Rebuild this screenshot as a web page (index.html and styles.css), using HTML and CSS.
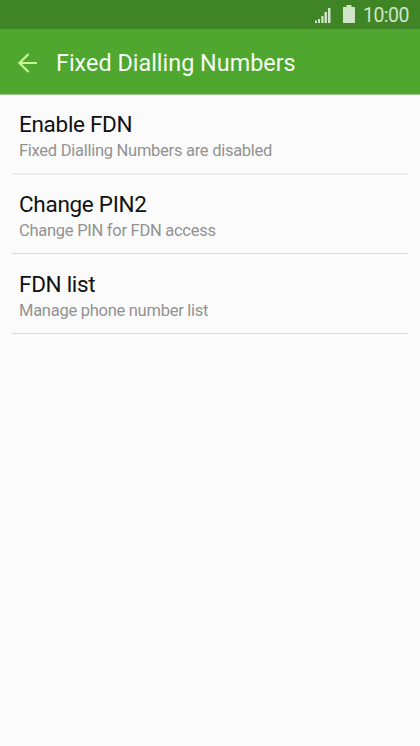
FILE: index.html
```html
<!DOCTYPE html>
<html lang="en">
<head>
  <meta charset="UTF-8">
  <title>Fixed Dialling Numbers</title>
  <link rel="stylesheet" href="styles.css">
</head>
<body>

<div class="status-bar">
  <svg class="signal" width="16" height="16" viewBox="0 0 16 16">
    <path d="M0 13.500h2V16H0zM3 12h2v4H3zM6.300 9h2.200v7H6.300zM9.500 5h2.500v11H9.500zM13 1h2.500v15H13z"/>
  </svg>
  <svg class="battery" width="12" height="18" viewBox="0 0 12 18">
    <path d="M3.500 0h5v2H12v16H0V2h3.500z"/>
  </svg>
  <span class="clock">10:00</span>
</div>

<header class="app-bar">
  <svg class="back" width="20" height="20" viewBox="0 0 20 20">
    <path d="M19 10H2M10.500 1L1.500 10l9 9"/>
  </svg>
  <h1>Fixed Dialling Numbers</h1>
</header>

<ul class="settings">
  <li class="setting">
    <div class="setting-title">Enable FDN</div>
    <div class="setting-summary">Fixed Dialling Numbers are disabled</div>
  </li>
  <li class="setting">
    <div class="setting-title">Change PIN2</div>
    <div class="setting-summary">Change PIN for FDN access</div>
  </li>
  <li class="setting">
    <div class="setting-title">FDN list</div>
    <div class="setting-summary">Manage phone number list</div>
  </li>
</ul>

</body>
</html>
```
FILE: styles.css
```css
body {
  margin: 0;
  min-height: 746px;
  font-family: Roboto, sans-serif;
  background: #fbfbfb;
}

.status-bar {
  display: flex;
  align-items: center;
  justify-content: flex-end;
  box-sizing: border-box;
  height: 29px;
  padding-right: 11px;
  background: #3f8526;
  color: #d0e5c8;
}

.status-bar svg {
  fill: currentColor;
}

.battery {
  margin: 0 8px 1px 12px;
}

.clock {
  margin-top: 1px;
  font-size: 19.500px;
  letter-spacing: -0.500px;
}

.app-bar {
  display: flex;
  align-items: center;
  box-sizing: border-box;
  height: 66px;
  padding: 2px 0 0 18px;
  border-bottom: 1px solid #9ccb89;
  background: #50a72f;
}

.back {
  fill: none;
  stroke: #c8f98c;
  stroke-width: 2.200;
}

.app-bar h1 {
  margin: 0 0 0 18px;
  font-size: 23.400px;
  font-weight: 400;
  color: #f5fbf2;
}

.settings {
  margin: -1px 0 0;
  padding: 0 12px;
  list-style: none;
}

.setting {
  box-sizing: border-box;
  height: 80px;
  padding: 16px 7px 0;
  border-bottom: 1px solid #dcdcdc;
}

.setting:first-child {
  height: 81px;
  margin-bottom: -1px;
  border-bottom: 2px solid #ececec;
}

.setting-title {
  margin-bottom: 1px;
  font-size: 22.500px;
  line-height: 28px;
  letter-spacing: -0.300px;
  color: #111;
}

.setting-summary {
  font-size: 16.500px;
  line-height: 24px;
  letter-spacing: -0.270px;
  color: #929292;
}
```
